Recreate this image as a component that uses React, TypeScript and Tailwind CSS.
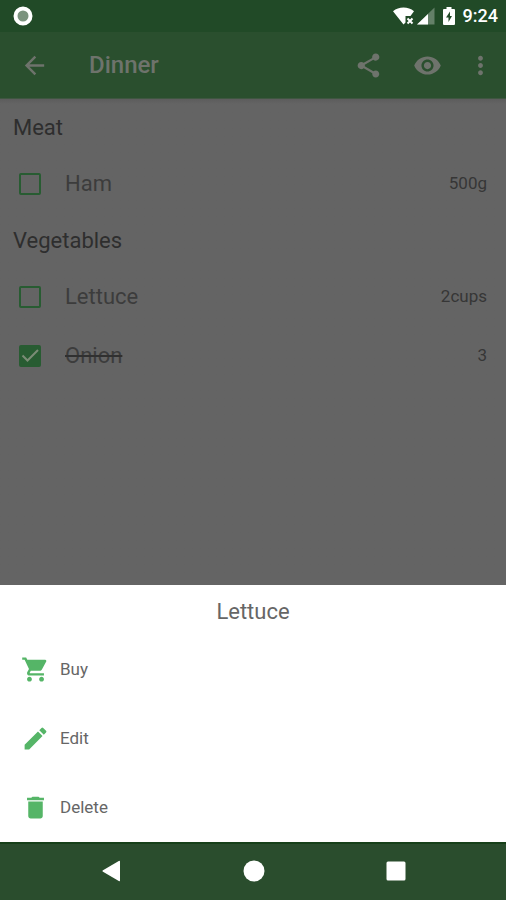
import { useState } from "react";
import type { ComponentType } from "react";
import {
  MdArrowBack,
  MdDelete,
  MdEdit,
  MdMoreVert,
  MdShare,
  MdShoppingCart,
  MdVisibility,
} from "react-icons/md";

type Item = { name: string; amount: string; bought: boolean };
type Section = { title: string; items: Item[] };

const initialSections: Section[] = [
  { title: "Meat", items: [{ name: "Ham", amount: "500g", bought: false }] },
  {
    title: "Vegetables",
    items: [
      { name: "Lettuce", amount: "2cups", bought: false },
      { name: "Onion", amount: "3", bought: true },
    ],
  },
];

const actions: { label: string; Icon: ComponentType<{ className?: string }> }[] = [
  { label: "Buy", Icon: MdShoppingCart },
  { label: "Edit", Icon: MdEdit },
  { label: "Delete", Icon: MdDelete },
];

function StatusBar() {
  return (
    <div className="flex h-8 items-center justify-between bg-[#214a27] pr-2 pl-[13px] text-white">
      <svg className="size-5" viewBox="0 0 20 20" aria-hidden="true">
        <circle cx="10" cy="10" r="7.5" fill="#7b937e" stroke="currentColor" strokeWidth="4" />
      </svg>
      <div className="flex items-center">
        <svg className="h-[18px] w-[22px]" viewBox="0 0 22 18" fill="currentColor" aria-hidden="true">
          <path d="M0 4.200C3 1.700 6.500 0.500 10.500 0.500s7.500 1.200 10.500 3.700L17.500 9H12.500v6.500L10.500 17.500z" />
          <path d="M14.500 11.500l5 5M19.500 11.500l-5 5" stroke="currentColor" strokeWidth="2" />
        </svg>
        <svg className="ml-[2px] h-[18px] w-[18px]" viewBox="0 0 18 18" fill="currentColor" aria-hidden="true">
          <path d="M0 17.500L17.500 0.500v17z" opacity="0.300" />
          <path d="M0 17.500L11 7v10.500z" />
        </svg>
        <svg className="ml-2 h-[18px] w-3" viewBox="0 0 12 18" aria-hidden="true">
          <path
            d="M3.500 0h5v2H11a1 1 0 0 1 1 1v14a1 1 0 0 1-1 1H1a1 1 0 0 1-1-1V3a1 1 0 0 1 1-1h2.500z"
            fill="currentColor"
          />
          <path d="M7 4.500L3 10.500h2.500V15L9 9H7z" fill="#214a27" />
        </svg>
        <span className="ml-2 text-lg font-medium">9:24</span>
      </div>
    </div>
  );
}

function Toolbar() {
  return (
    <header className="flex h-[67px] items-center border-b border-[#3f5641] bg-[#2a4f2e] pr-[11px] pl-5 text-[#6e736c]">
      <button type="button" aria-label="Back">
        <MdArrowBack className="size-[29px]" />
      </button>
      <h1 className="ml-10 flex-1 text-2xl font-medium">Dinner</h1>
      <button type="button" aria-label="Share">
        <MdShare className="size-[29px]" />
      </button>
      <button type="button" aria-label="Show" className="ml-[30px]">
        <MdVisibility className="size-[29px]" />
      </button>
      <button type="button" aria-label="More options" className="ml-6">
        <MdMoreVert className="size-[29px]" />
      </button>
    </header>
  );
}

function ItemRow({ item, onToggle }: { item: Item; onToggle: () => void }) {
  return (
    <li>
      <label className="flex h-[59px] items-center pr-[19px] pl-[19px]">
        <span className="grid size-[22px] place-items-center">
          <input
            type="checkbox"
            checked={item.bought}
            onChange={onToggle}
            className="col-start-1 row-start-1 size-[22px] appearance-none rounded-xs border-2 border-[#285c32] checked:bg-[#285c32]"
          />
          {item.bought && (
            <svg
              className="pointer-events-none col-start-1 row-start-1 size-[22px]"
              viewBox="0 0 22 22"
              fill="none"
              stroke="#7b8c76"
              strokeWidth="2"
              aria-hidden="true"
            >
              <path d="M3.500 10.500l5 5L19 5" />
            </svg>
          )}
        </span>
        <span
          className={
            item.bought
              ? "ml-6 flex-1 text-[22px] text-[#3c3c3c] line-through decoration-[#303030] decoration-2"
              : "ml-6 flex-1 text-[22px] text-[#3c3c3c]"
          }
        >
          {item.name}
        </span>
        <span className="text-[17px] text-[#363636]">{item.amount}</span>
      </label>
    </li>
  );
}

export default function App() {
  const [sections, setSections] = useState(initialSections);

  function toggle(name: string) {
    setSections((prev) =>
      prev.map((s) => ({
        ...s,
        items: s.items.map((i) => (i.name === name ? { ...i, bought: !i.bought } : i)),
      }))
    );
  }

  return (
    <div className="flex min-h-screen flex-col bg-[#646464] font-[Roboto,sans-serif]">
      <StatusBar />
      <Toolbar />

      <main className="flex-1 bg-linear-to-b from-[#5c5c5c] to-[#646464] to-1% pt-px">
        {sections.map((section) => (
          <section key={section.title}>
            <h2 className="flex h-[54px] items-center px-[13px] text-[22px] text-[#2e2e2e]">
              {section.title}
            </h2>
            <ul>
              {section.items.map((item) => (
                <ItemRow key={item.name} item={item} onToggle={() => toggle(item.name)} />
              ))}
            </ul>
          </section>
        ))}
      </main>

      <div role="dialog" aria-labelledby="sheet-title" className="bg-white text-[#666666]">
        <h2 id="sheet-title" className="flex h-[50px] items-center justify-center pt-0.5 text-[22px]">
          Lettuce
        </h2>
        {actions.map(({ label, Icon }) => (
          <button
            key={label}
            type="button"
            className="flex h-[69px] w-full items-center gap-[10px] px-[21px] text-[17px]"
          >
            <Icon className="size-[29px] text-[#55b567]" />
            {label}
          </button>
        ))}
      </div>

      <nav className="grid h-[58px] grid-cols-3 place-items-center border-t-2 border-[#174019] bg-[#2a4d2d] pr-[39px] pb-0.5 pl-[41px] text-white">
        <button type="button" aria-label="Back">
          <svg className="size-[22px]" viewBox="0 0 22 22" fill="currentColor" aria-hidden="true">
            <path d="M19 1.500v19a.8.800 0 0 1-1.200.600L2 11.800a.9.900 0 0 1 0-1.600L17.800.900A.8.800 0 0 1 19 1.500z" />
          </svg>
        </button>
        <button type="button" aria-label="Home">
          <svg className="size-[22px]" viewBox="0 0 22 22" fill="currentColor" aria-hidden="true">
            <circle cx="11" cy="11" r="10.500" />
          </svg>
        </button>
        <button type="button" aria-label="Recent apps">
          <svg className="size-[22px]" viewBox="0 0 22 22" fill="currentColor" aria-hidden="true">
            <rect x="1.500" y="1.500" width="19" height="19" rx="1.500" />
          </svg>
        </button>
      </nav>
    </div>
  );
}
